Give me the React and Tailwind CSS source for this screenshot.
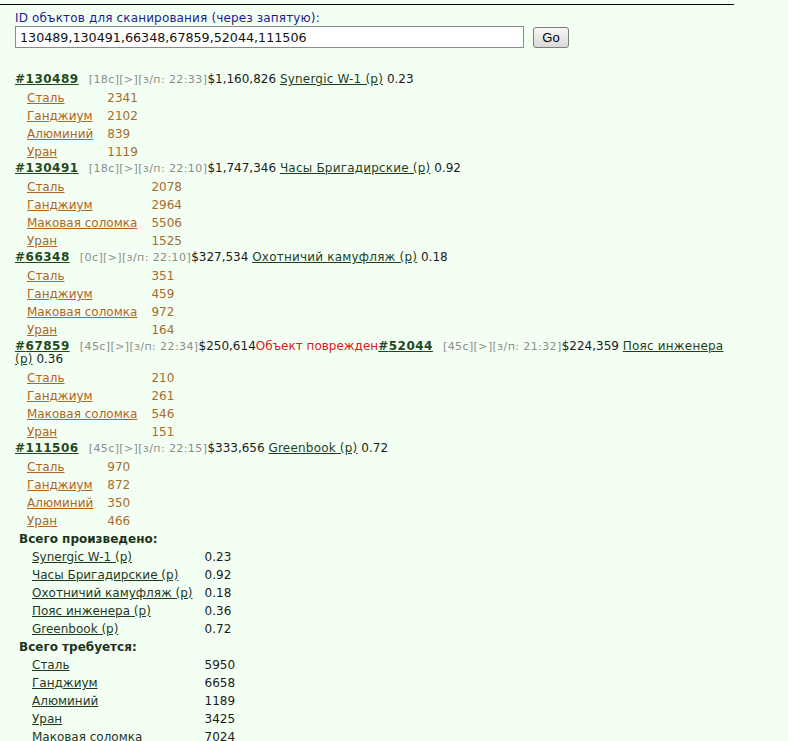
import React from 'react';

const groups = [
  {
    head: [
      { id: '130489', age: '18c', time: '22:33', price: '$1,160,826', item: 'Synergic W-1 (р)', rate: '0.23' },
    ],
    res: [['Сталь', 2341], ['Ганджиум', 2102], ['Алюминий', 839], ['Уран', 1119]],
  },
  {
    head: [
      { id: '130491', age: '18c', time: '22:10', price: '$1,747,346', item: 'Часы Бригадирские (р)', rate: '0.92' },
    ],
    res: [['Сталь', 2078], ['Ганджиум', 2964], ['Маковая соломка', 5506], ['Уран', 1525]],
  },
  {
    head: [
      { id: '66348', age: '0c', time: '22:10', price: '$327,534', item: 'Охотничий камуфляж (р)', rate: '0.18' },
    ],
    res: [['Сталь', 351], ['Ганджиум', 459], ['Маковая соломка', 972], ['Уран', 164]],
  },
  {
    head: [
      { id: '67859', age: '45c', time: '22:34', price: '$250,614', damaged: true },
      { id: '52044', age: '45c', time: '21:32', price: '$224,359', item: 'Пояс инженера (р)', rate: '0.36' },
    ],
    res: [['Сталь', 210], ['Ганджиум', 261], ['Маковая соломка', 546], ['Уран', 151]],
  },
  {
    head: [
      { id: '111506', age: '45c', time: '22:15', price: '$333,656', item: 'Greenbook (р)', rate: '0.72' },
    ],
    res: [['Сталь', 970], ['Ганджиум', 872], ['Алюминий', 350], ['Уран', 466]],
  },
];

const produced = [
  ['Synergic W-1 (р)', '0.23'],
  ['Часы Бригадирские (р)', '0.92'],
  ['Охотничий камуфляж (р)', '0.18'],
  ['Пояс инженера (р)', '0.36'],
  ['Greenbook (р)', '0.72'],
];

const required = [
  ['Сталь', 5950],
  ['Ганджиум', 6658],
  ['Алюминий', 1189],
  ['Уран', 3425],
  ['Маковая соломка', 7024],
];

function Head({ h }) {
  return (
    <>
      <a className="font-bold tracking-[0.5px] text-[#1f4a1f] underline mr-[10px]">#{h.id}</a>
      <span className="text-[11px] tracking-[0.4px] text-[#8c8c8c]">[{h.age}][&gt;][з/п: {h.time}]</span>
      <span className="text-[#1a1a1a]">{h.price}</span>
      {h.damaged ? (
        <span className="text-[#d42020]">Объект поврежден</span>
      ) : (
        <>
          {' '}
          <a className="underline tracking-[0.2px] text-[#1f3f1f]">{h.item}</a>
          <span className="text-[#1a1a1a]"> {h.rate}</span>
        </>
      )}
    </>
  );
}

export default function App() {
  return (
    <div className="min-h-screen bg-[#f4fff4] text-[12px] text-[#1a1a1a] font-['DejaVu_Sans',sans-serif]">
      <div className="w-[734px] pt-[4px]">
        <div className="border-t border-black" />

        <div className="pl-[15px]">
          {/* scan form */}
          <div className="mt-[6px] leading-[15px] tracking-[0.15px] text-[#1c1c8e]">
            ID объктов для сканирования (через запятую):
          </div>
          <div className="flex items-center gap-[9px]">
            <input
              readOnly
              value="130489,130491,66348,67859,52044,111506"
              className="w-[509px] h-[22px] px-[4px] border border-[#8a8a8a] bg-white text-[12.7px] text-[#111] outline-none font-['DejaVu_Sans',sans-serif]"
            />
            <button className="h-[21px] w-[36px] rounded-[3px] border border-[#7d7d7d] bg-gradient-to-b from-[#f7f7f7] to-[#d9d9d9] text-[13px] text-black font-['Liberation_Sans',sans-serif]">
              Go
            </button>
          </div>

          {/* objects */}
          <div className="mt-[24px]">
            {groups.map((g, i) => (
              <div key={i}>
                <div className="pt-px leading-[13px]">
                  {g.head.map((h) => (
                    <Head key={h.id} h={h} />
                  ))}
                </div>
                <div className="mt-[3px] pl-[12px] grid grid-cols-[max-content_max-content] gap-x-[14px]">
                  {g.res.map(([name, val]) => (
                    <React.Fragment key={name}>
                      <a className="leading-[18px] underline text-[#b0661f]">{name}</a>
                      <span className="leading-[18px] text-[#a66c2c]">{val}</span>
                    </React.Fragment>
                  ))}
                </div>
              </div>
            ))}
          </div>

          {/* totals */}
          <div className="pl-[4px] grid grid-cols-[max-content_max-content] gap-x-[12px]">
            <div className="col-span-2 leading-[18px] font-bold text-[#1a331a]">Всего произведено:</div>
            {produced.map(([name, val]) => (
              <React.Fragment key={name}>
                <a className="pl-[13px] leading-[18px] underline text-[#1f3a1f]">{name}</a>
                <span className="leading-[18px] text-[#1a1a1a]">{val}</span>
              </React.Fragment>
            ))}
            <div className="col-span-2 leading-[18px] font-bold text-[#1a331a]">Всего требуется:</div>
            {required.map(([name, val]) => (
              <React.Fragment key={name}>
                <a className="pl-[13px] leading-[18px] underline text-[#1f3a1f]">{name}</a>
                <span className="leading-[18px] text-[#1a1a1a]">{val}</span>
              </React.Fragment>
            ))}
          </div>
        </div>
      </div>
    </div>
  );
}
